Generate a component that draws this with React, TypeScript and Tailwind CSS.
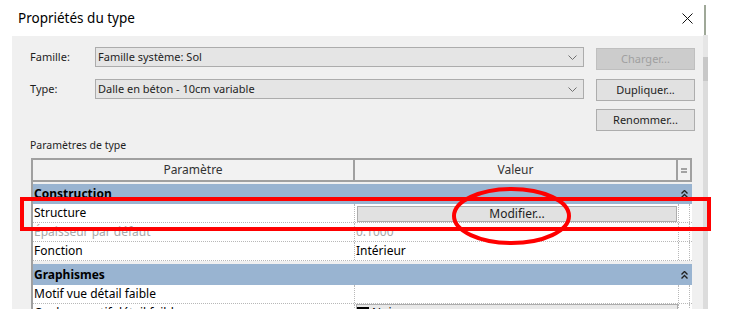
import { ReactNode } from 'react';

function Chevron() {
  return (
    <svg width="9" height="5" viewBox="0 0 9 5" className="shrink-0">
      <path d="M0.5 0.5 L4.5 4.5 L8.5 0.5" fill="none" stroke="#707070" strokeWidth="1" />
    </svg>
  );
}

function CollapseIcon() {
  return (
    <svg width="7" height="8" viewBox="0 0 7 8">
      <path d="M0.5 3.5 L3.5 0.5 L6.5 3.5 M0.5 7.5 L3.5 4.5 L6.5 7.5" fill="none" stroke="#222" strokeWidth="1.4" />
    </svg>
  );
}

function Field({ label, value, button, disabled }: { label: string; value: string; button: string; disabled?: boolean }) {
  return (
    <div className="flex h-[23px] w-[665px] items-start">
      <div className="flex h-[20px] w-[65px] items-center text-[11px] text-[#1e1e1e]">{label}</div>
      <div className="flex h-[20px] w-[489px] items-center justify-between border border-[#acacac] bg-[#e5e5e5] pl-[2px] pr-[6px] text-[11px] text-[#1e1e1e]">
        <span>{value}</span>
        <Chevron />
      </div>
      <button
        className={
          disabled
            ? 'ml-[12px] mt-[1px] h-[22px] w-[99px] border border-[#bfbfbf] bg-[#cccccc] text-[11px] text-[#a0a0a0]'
            : 'ml-[12px] h-[22px] w-[99px] border border-[#adadad] bg-[#e1e1e1] text-[11px] text-[#1e1e1e]'
        }
      >
        {button}
      </button>
    </div>
  );
}

function GroupRow({ title, h }: { title: string; h: string }) {
  return (
    <div className={`flex ${h} w-[659px] items-center justify-between bg-[#99b4d1] pl-[1px] pr-[4px]`}>
      <span className="text-[12px] font-bold text-black">{title}</span>
      <CollapseIcon />
    </div>
  );
}

function Row({ name, value, grey }: { name: string; value: ReactNode; grey?: boolean }) {
  return (
    <div className="flex h-[19px] w-[659px] border-b border-dotted border-[#b8b8b8] bg-white">
      <div
        className={`flex w-[322px] items-center border-r border-dotted border-[#b8b8b8] pl-[1px] text-[12px] ${grey ? 'text-[#a8a8a8]' : 'text-black'}`}
      >
        {name}
      </div>
      <div className={`flex w-[323px] items-center pl-[1px] text-[12px] ${grey ? 'text-[#a8a8a8]' : 'text-black'}`}>
        {value}
      </div>
      <div className="w-[12px] border-x border-dotted border-[#b8b8b8]" />
    </div>
  );
}

export default function App() {
  return (
    <div className="relative flex h-[325px] w-[735px] overflow-hidden bg-white font-['Noto_Sans',sans-serif]">
      <div className="flex w-[703px] flex-col">
        {/* Title bar */}
        <div className="flex h-[36px] items-center justify-between pl-[18px] pr-[10px]">
          <span className="text-[13.5px] text-black">Propriétés du type</span>
          <svg width="11" height="11" viewBox="0 0 11 11">
            <path d="M0.5 0.5 L10.5 10.5 M10.5 0.5 L0.5 10.5" stroke="#111" strokeWidth="1" />
          </svg>
        </div>

        {/* Dialog body */}
        <div className="ml-[12px] h-[273px] overflow-hidden bg-[#f0f0f0] pl-[18px] pt-[11px]">
          <Field label="Famille:" value="Famille système: Sol" button="Charger..." disabled />
          <div className="mt-[9px]">
            <Field label="Type:" value="Dalle en béton - 10cm variable" button="Dupliquer..." />
          </div>
          <div className="mt-[7px] flex w-[665px] justify-end">
            <button className="h-[22px] w-[99px] border border-[#adadad] bg-[#e1e1e1] text-[11px] text-[#1e1e1e]">
              Renommer...
            </button>
          </div>

          <div className="mt-[7px] h-[14px] text-[10.5px] leading-[14px] text-[#1e1e1e]">Paramètres de type</div>

          {/* Table */}
          <div className="ml-[1px] mt-[6px] w-[661px] border-l-2 border-[#a0a0a0]">
            <div className="flex h-[24px] border-y-2 border-r-2 border-[#a0a0a0] bg-[#f2f2f2] text-[12px] text-[#333]">
              <div className="flex w-[322px] items-center justify-center border-r-2 border-[#a0a0a0]">Paramètre</div>
              <div className="flex w-[323px] items-center justify-center border-r-2 border-[#a0a0a0]">Valeur</div>
              <div className="flex flex-1 items-center justify-center">
                <svg width="6" height="5" viewBox="0 0 6 5">
                  <path d="M0 1 H6 M0 4 H6" stroke="#555" strokeWidth="1" />
                </svg>
              </div>
            </div>
            <div className="mt-[2px]">
              <GroupRow title="Construction" h="h-[20px]" />
              <div className="flex h-[19px] w-[659px] border-b border-dotted border-[#b8b8b8] bg-white">
                <div className="flex w-[322px] items-center border-r border-dotted border-[#b8b8b8] pl-[1px] text-[12px] text-black">
                  Structure
                </div>
                <div className="flex w-[323px] items-start pl-[2px] pr-[1px] pt-[2px]">
                  <div className="flex h-[16px] w-full items-center justify-center border border-[#adadad] bg-[#e1e1e1] text-[12px] text-[#1e1e1e]">
                    Modifier...
                  </div>
                </div>
                <div className="w-[12px] border-x border-dotted border-[#b8b8b8]" />
              </div>
              <Row name="Épaisseur par défaut" value="0.1000" grey />
              <Row name="Fonction" value="Intérieur" />
              <div className="h-[3px]" />
              <GroupRow title="Graphismes" h="h-[21px]" />
              <Row name="Motif vue détail faible" value="" />
              <Row
                name="Couleur motif détail faible"
                value={
                  <div className="flex h-full w-full items-center gap-[3px] border border-[#adadad] bg-[#e9e9e9]">
                    <span className="h-[12px] w-[12px] bg-black" />
                    <span>Noir</span>
                  </div>
                }
              />
            </div>
          </div>
        </div>
      </div>

      {/* Background window edge */}
      <div className="flex w-[5px] flex-col">
        <div className="h-[5px]" />
        <div className="ml-[1px] h-[30px] w-[2px] bg-[#9fa898]" />
        <div className="h-[22px] bg-[#e6e6e6]" />
        <div className="h-[24px] bg-[#c8c8c8]" />
        <div className="h-[228px] bg-[#dcdcdc]" />
      </div>

      {/* Red annotations */}
      <div className="pointer-events-none absolute left-[20px] top-[197px] h-[34px] w-[691px] border-4 border-[#ff0000]" />
      <svg className="pointer-events-none absolute left-[449px] top-[185px]" width="126" height="62" viewBox="0 0 126 62">
        <ellipse cx="62.5" cy="31" rx="57.5" ry="27" fill="none" stroke="#ff0000" strokeWidth="4" />
      </svg>
    </div>
  );
}
